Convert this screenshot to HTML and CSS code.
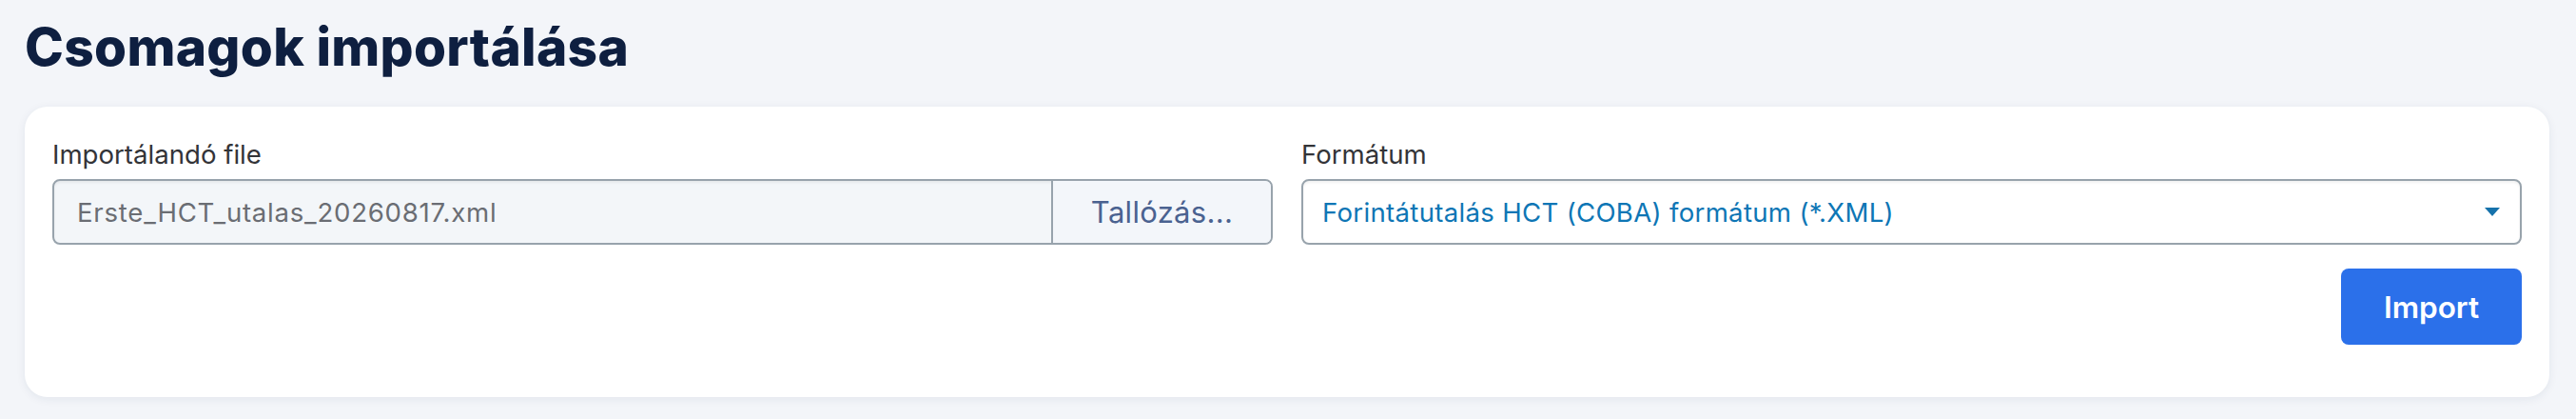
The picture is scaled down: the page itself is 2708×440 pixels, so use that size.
FILE: index.html
```html
<!DOCTYPE html>
<html lang="hu">
<head>
<meta charset="utf-8">
<title>Csomagok importálása</title>
<link rel="stylesheet" href="styles.css">
</head>
<body>
<h1 class="page-title">Csomagok importálása</h1>
<section class="card">
  <div class="fields">
    <div class="field">
      <label class="field-label">Importálandó file</label>
      <div class="file-input">
        <span class="file-name">Erste_HCT_utalas_20260817.xml</span>
        <span class="file-browse">Tallózás...</span>
      </div>
    </div>
    <div class="field">
      <label class="field-label">Formátum</label>
      <div class="select">
        <span class="select-value">Forintátutalás HCT (COBA) formátum (*.XML)</span>
        <svg class="select-arrow" viewBox="0 0 16 9" width="16" height="9"><path d="M0 0H16L8 9Z" fill="#1672ab"/></svg>
      </div>
    </div>
  </div>
  <div class="actions">
    <button class="btn-primary" type="button">Import</button>
  </div>
</section>
</body>
</html>
```

FILE: styles.css
```css
html, body {
  margin: 0;
  padding: 0;
}
body {
  background: #f3f5f9;
  font-family: Inter, "Noto Sans", sans-serif;
  padding: 16px 28px 0 26px;
  height: 440px;
  box-sizing: border-box;
}
.page-title {
  margin: 0;
  font-size: 55px;
  line-height: 66px;
  font-weight: 800;
  color: #0e1f40;
  letter-spacing: 0.3px;
}
.card {
  margin-top: 30px;
  background: #ffffff;
  border-radius: 24px;
  box-shadow: 0 2px 10px rgba(30, 50, 90, 0.08);
  padding: 30px 29px 55px 29px;
  height: 305px;
  box-sizing: border-box;
}
.fields {
  display: grid;
  grid-template-columns: 1fr 1fr;
  column-gap: 30px;
}
.field {
  display: flex;
  flex-direction: column;
}
.field-label {
  font-size: 27.6px;
  line-height: 41px;
  color: #333438;
  margin-bottom: 5px;
}
.file-input {
  display: flex;
  height: 69px;
  box-sizing: border-box;
  border: 2px solid #98a3ac;
  border-radius: 8px;
  background: #f3f6f9;
  box-shadow: inset 0 2px 3px rgba(0, 0, 0, 0.06);
  overflow: hidden;
}
.file-name {
  flex: 1;
  display: flex;
  align-items: center;
  padding-left: 24px;
  font-size: 27.6px;
  letter-spacing: 0.75px;
  color: #6a6d73;
}
.file-browse {
  width: 229px;
  border-left: 2px solid #98a3ac;
  display: flex;
  align-items: center;
  justify-content: center;
  font-size: 31px;
  letter-spacing: 0.3px;
  color: #4a6290;
  background: #f3f6fa;
}
.select {
  display: flex;
  align-items: center;
  justify-content: space-between;
  height: 69px;
  box-sizing: border-box;
  border: 2px solid #98a3ac;
  border-radius: 8px;
  background: #ffffff;
  box-shadow: inset 0 2px 3px rgba(0, 0, 0, 0.06);
  padding: 0 21px 0 20px;
}
.select-value {
  font-size: 27.6px;
  letter-spacing: 0.3px;
  color: #0e76b5;
}
.select-arrow {
  display: block;
}
.actions {
  display: flex;
  justify-content: flex-end;
  margin-top: 25px;
}
.btn-primary {
  width: 190px;
  height: 80px;
  border: none;
  border-radius: 8px;
  background: #2b70ea;
  color: #ffffff;
  font-family: Inter, "Noto Sans", sans-serif;
  font-size: 31.5px;
  font-weight: 600;
}
```
